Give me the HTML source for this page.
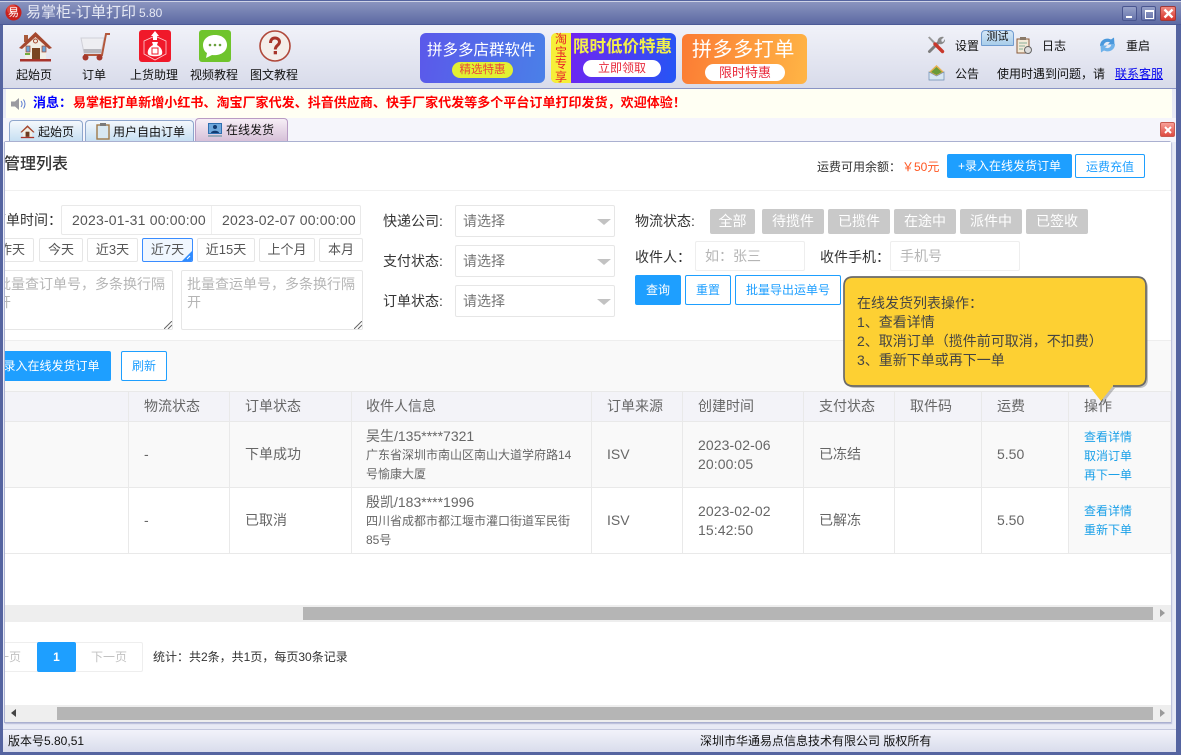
<!DOCTYPE html>
<html lang="zh"><head><meta charset="utf-8"><title>易掌柜-订单打印</title>
<style>
html,body{margin:0;padding:0;width:1181px;height:755px;overflow:hidden;background:#e6e8f3}
body{position:relative;font-family:"Liberation Sans","Noto Sans CJK SC",sans-serif;font-size:14px;color:#666}
.a,.t,.b,svg{position:absolute}
.t{white-space:nowrap;line-height:18px}
.w{font-family:"Liberation Sans","WenQuanYi Zen Hei",sans-serif;font-size:12px;color:#111}
.b{box-sizing:border-box;text-align:center;white-space:nowrap;border-radius:2px}
.bl{background:#1e9fff;color:#fff;font-size:12px;line-height:24px}
.ol{background:#fff;border:1px solid #1e9fff;color:#1e9fff;font-size:12px}
.dt{background:#fff;border:1px solid #e6e6e6;color:#555;font-size:13px;line-height:22px;height:24px;top:238px}
.sel{box-sizing:border-box;position:absolute;left:455px;width:160px;height:32px;border:1px solid #e6e6e6;border-radius:2px;background:#fff;color:#757575;padding-left:7px;line-height:30px}
.sel:after{content:"";position:absolute;right:3px;top:13px;border:7px solid transparent;border-top:6px solid #c2c2c2}
.tag{top:209px;height:25px;background:#c9c9c9;color:#fff;line-height:25px;font-size:14px}
.ta{box-sizing:border-box;position:absolute;top:270px;height:60px;border:1px solid #e6e6e6;border-radius:2px;background:#fff;color:#b5b5b5;font-size:14px;line-height:18px;padding:4px 5px;overflow:hidden}
.vl{position:absolute;width:1px;background:#e9e9e9;top:391px;height:163px}
.hl{position:absolute;height:1px;background:#e9e9e9;left:5px;width:1165px}
.lk{color:#1aa0e8;font-size:12px}
</style></head><body>

<!-- outer frame -->
<div class="a" style="left:0;top:0;width:1181px;height:755px;background:#5564a0"></div>
<div class="a" style="left:3px;top:1px;width:1173px;height:751px;background:#e8eaf5"></div>
<div class="a" style="left:0;top:1px;width:1181px;height:1px;background:#cfd3e6"></div>

<!-- title bar -->
<div class="a" style="left:0;top:2px;width:1181px;height:22px;background:linear-gradient(#8a94bf,#5d6aa3)"></div>
<div class="a" style="left:0;top:24px;width:1181px;height:1px;background:#4c5a96"></div>
<svg style="left:5px;top:4px" width="17" height="17"><circle cx="8.5" cy="8.5" r="8" fill="#c8201c"/><circle cx="7" cy="5.5" r="5" fill="#e8584c" opacity=".7"/></svg>
<div class="t" style="left:6px;top:4px;width:15px;text-align:center;font-size:11px;color:#fff">易</div>
<div class="t" style="left:26px;top:4px;font-size:15px;color:#e6e9f4;font-family:'Liberation Sans','WenQuanYi Zen Hei',sans-serif">易掌柜-订单打印</div>
<div class="t" style="left:139px;top:4px;font-size:12px;color:#e6e9f4">5.80</div>
<div class="a" style="left:1122px;top:6px;width:15px;height:15px;background:linear-gradient(#98a2c9,#6573aa);border:1px solid #4a5690;box-sizing:border-box;border-radius:2px"><div class="a" style="left:3px;top:9px;width:6px;height:2px;background:#fff"></div></div>
<div class="a" style="left:1141px;top:6px;width:15px;height:15px;background:linear-gradient(#98a2c9,#6573aa);border:1px solid #4a5690;box-sizing:border-box;border-radius:2px"><div class="a" style="left:3px;top:3px;width:7px;height:6px;border:1px solid #fff;border-top-width:2px"></div></div>
<div class="a" style="left:1160px;top:6px;width:16px;height:15px;background:linear-gradient(#f08a80,#d8342c);border:1px solid #a03838;box-sizing:border-box;border-radius:2px"><svg style="left:2px;top:1px" width="11" height="11"><path d="M1.5 1.5L9.5 9.5M9.5 1.5L1.5 9.5" stroke="#fff" stroke-width="2.4"/></svg></div>

<!-- toolbar -->
<div class="a" style="left:3px;top:25px;width:1173px;height:63px;background:linear-gradient(#f1f2f9,#d8dbea)"></div>
<div class="a" style="left:3px;top:88px;width:1173px;height:1px;background:#8a94c4"></div>

<!-- home -->
<svg style="left:18px;top:30px" width="35" height="33" viewBox="0 0 35 33">
<rect x="6" y="5" width="4" height="7" fill="#a85a3a"/>
<path d="M7 15L17.5 5L28 15V29H7Z" fill="#f2efe6"/>
<path d="M1 18L17.5 2L34 18L31 19L17.5 7L4 19Z" fill="#a5482f"/>
<circle cx="17.5" cy="11" r="2" fill="none" stroke="#a5482f"/>
<rect x="14" y="18" width="8" height="11" fill="#7a4522"/><rect x="8" y="16" width="4" height="6" fill="#6aa5d8" stroke="#a5482f" stroke-width=".7"/><rect x="24" y="16" width="4" height="6" fill="#6aa5d8" stroke="#a5482f" stroke-width=".7"/>
<rect x="2" y="29" width="31" height="2.500" fill="#a8342c"/><rect x="7" y="23" width="5" height="2" fill="#74ac3c"/>
</svg>
<!-- cart -->
<svg style="left:80px;top:32px" width="32" height="31" viewBox="0 0 32 31">
<path d="M1 6H24L21 21H4Z" fill="#eeeef2" stroke="#d0d0d8"/><path d="M4 21H21L21.500 17H3.500Z" fill="#b8b8be"/>
<path d="M30 2H26L22 23H4" fill="none" stroke="#b3583c" stroke-width="2"/>
<circle cx="5.5" cy="25.5" r="3" fill="#a5382c"/><circle cx="19.5" cy="25.5" r="3" fill="#a5382c"/>
</svg>
<!-- red bag -->
<svg style="left:139px;top:30px" width="32" height="32" viewBox="0 0 32 32">
<rect width="32" height="32" rx="3" fill="#f0192a"/>
<path d="M16 6L27 11V24L16 30L5 24V11Z" fill="none" stroke="#fff" stroke-width=".8" opacity=".8"/>
<path d="M16 1L20 6H18V10H14V6H12Z" fill="#fff"/>
<path d="M13 12H19L18 15C22 17 24 21 23 24C22 27 10 27 9 24C8 21 10 17 14 15Z" fill="#fff"/>
<rect x="13" y="18" width="6" height="6" fill="none" stroke="#f0192a"/>
</svg>
<!-- chat -->
<svg style="left:199px;top:30px" width="32" height="32" viewBox="0 0 32 32">
<rect width="32" height="32" rx="3" fill="#6fc42c"/>
<path d="M16 5C8 5 4 10 4 15C4 19 6 22 8 23L7 28L13 25C21 26 28 22 28 15C28 10 24 5 16 5Z" fill="#fff"/>
<circle cx="11" cy="15" r="1.300" fill="#6aa03c"/><circle cx="16" cy="15" r="1.300" fill="#6aa03c"/><circle cx="21" cy="15" r="1.300" fill="#6aa03c"/>
</svg>
<!-- question -->
<svg style="left:259px;top:30px" width="32" height="32" viewBox="0 0 32 32">
<circle cx="16" cy="16" r="15" fill="#f4eeea" stroke="#b0483a" stroke-width="1.6"/>
<path d="M11.500 13C11.500 9.500 13.500 8 16 8C18.500 8 20.500 9.800 20.500 12C20.500 15.200 16.300 15.500 16.300 19.500" fill="none" stroke="#a8352a" stroke-width="3"/>
<rect x="14.700" y="21" width="3.300" height="3.300" fill="#a8352a"/>
</svg>

<div class="t w" style="left:16px;top:66px">起始页</div>
<div class="t w" style="left:82px;top:66px">订单</div>
<div class="t w" style="left:130px;top:66px">上货助理</div>
<div class="t w" style="left:190px;top:66px">视频教程</div>
<div class="t w" style="left:250px;top:66px">图文教程</div>

<!-- banners -->
<div class="a" style="left:420px;top:33px;width:125px;height:50px;border-radius:6px;background:linear-gradient(100deg,#5b58ea,#4a80e8)"></div>
<div class="t" style="left:427px;top:41px;font-size:15.500px;color:#fff;line-height:20px">拼多多店群软件</div>
<div class="a" style="left:452px;top:62px;width:61px;height:16px;border-radius:8px;background:#e2f033;text-align:center;color:#e8483a;font-size:11.500px;line-height:16px">精选特惠</div>

<div class="a" style="left:551px;top:33px;width:125px;height:50px;border-radius:6px;background:linear-gradient(100deg,#7d1cf0,#2456f5)"></div>
<div class="a" style="left:551px;top:33px;width:20px;height:50px;background:#f6ef38;border-radius:5px 0 0 5px;color:#e8222a;font-size:12px;line-height:12.500px;text-align:center">淘<br>宝<br>专<br>享</div>
<div class="t" style="left:573px;top:37px;font-size:16.500px;color:#f3f04a;font-weight:bold;line-height:20px">限时低价特惠</div>
<div class="a" style="left:583px;top:60px;width:78px;height:17px;border-radius:9px;background:#fff;text-align:center;color:#e8283a;font-size:12px;line-height:17px">立即领取</div>

<div class="a" style="left:682px;top:34px;width:125px;height:50px;border-radius:6px;background:linear-gradient(100deg,#fb7b34,#ffb545)"></div>
<div class="t" style="left:692px;top:38px;font-size:20px;color:#fff;line-height:24px;letter-spacing:.6px">拼多多打单</div>
<div class="a" style="left:705px;top:64px;width:80px;height:17px;border-radius:9px;background:#fff;text-align:center;color:#e8283a;font-size:13px;line-height:17px">限时特惠</div>

<!-- right tools -->
<svg style="left:927px;top:36px" width="18" height="18" viewBox="0 0 18 18">
<path d="M2.500 15.500L13 5" stroke="#7d7d7d" stroke-width="3" stroke-linecap="round"/>
<path d="M10.500 5.500C10.500 2 14 0 17 1L14 4L14.500 5.500L16 6L18 3C18.500 6.500 15 9 12 8Z" fill="#8a8a8a"/>
<path d="M1 1.500L2.500 .5L8 6L6.500 7.500Z" fill="#9a9a9a"/>
<path d="M8 8L15.500 15.500" stroke="#c8382c" stroke-width="3.400" stroke-linecap="round"/>
</svg>
<div class="t w" style="left:955px;top:37px">设置</div>
<div class="a" style="left:981px;top:30px;width:33px;height:16px;box-sizing:border-box;border:1px solid #6f9bd0;border-radius:4px 4px 1px 1px;background:linear-gradient(#d4e6f6,#a8cdea);text-align:center;line-height:13px;font-size:11px;color:#111;font-family:'Liberation Sans','WenQuanYi Zen Hei',sans-serif">测试</div>
<svg style="left:1016px;top:37px" width="16" height="17" viewBox="0 0 16 17">
<rect x="1" y="2" width="12" height="14" fill="#f3ead8" stroke="#8a5a3a"/><rect x="4" y="0" width="6" height="3" fill="#8a7a6a"/>
<path d="M3 6H11M3 9H9M3 12H7" stroke="#8ab09a"/><circle cx="12" cy="13" r="3.500" fill="#ddd" stroke="#666"/>
</svg>
<div class="t w" style="left:1042px;top:37px">日志</div>
<svg style="left:1099px;top:37px" width="17" height="16" viewBox="0 0 17 16">
<path d="M1 9C1 3 7 0 12 2.500L15 .5L15.500 7.500H8.500L11 5.500C8 4 5 5.500 4.500 9Z" fill="#4a98dc"/>
<path d="M16 7C16 13 10 16 5 13.500L2 15.500L1.500 8.500H8.500L6 10.500C9 12 12 10.500 12.500 7Z" fill="#6fb2ea"/>
</svg>
<div class="t w" style="left:1126px;top:37px">重启</div>
<svg style="left:928px;top:64px" width="17" height="17" viewBox="0 0 17 17">
<path d="M1 8L8.500 1L16 8V16H1Z" fill="#e8b050"/><path d="M3 8L8.500 3L14 8L8.500 11Z" fill="#6a9a38"/>
<path d="M1 8L8.500 12L16 8V16H1Z" fill="#d8e6f2" stroke="#6a8ab0" stroke-width=".7"/>
</svg>
<div class="t w" style="left:955px;top:65px">公告</div>
<div class="t w" style="left:997px;top:65px">使用时遇到问题，请</div>
<div class="t w" style="left:1115px;top:65px;color:#0000ee;text-decoration:underline">联系客服</div>

<!-- message -->
<div class="a" style="left:6px;top:89px;width:1166px;height:29px;background:#fffff3"></div>
<svg style="left:11px;top:98px" width="16" height="12" viewBox="0 0 16 12">
<path d="M0 3.500H4L8 0V12L4 8.500H0Z" fill="#9a9aa0"/><path d="M10 3C11.500 5 11.500 7 10 9M12.500 1.500C14.500 4.500 14.500 7.500 12.500 10.500" fill="none" stroke="#5a7ad0"/>
</svg>
<div class="t" style="left:33px;top:94px;font-size:13px;font-weight:bold;color:#0000ff">消息：</div>
<div class="t" style="left:73px;top:94px;font-size:13px;font-weight:bold;color:#ff0000;letter-spacing:.04px">易掌柜打单新增小红书、淘宝厂家代发、抖音供应商、快手厂家代发等多个平台订单打印发货，欢迎体验！</div>

<!-- tabs strip -->
<div class="a" style="left:3px;top:118px;width:1173px;height:24px;background:#f5f5fb"></div>
<div class="a" style="left:9px;top:120px;width:74px;height:22px;box-sizing:border-box;border:1px solid #8ea6cc;border-bottom:0;border-radius:4px 4px 0 0;background:linear-gradient(#f4f8fc,#c4def2)"></div>
<div class="a" style="left:85px;top:120px;width:109px;height:22px;box-sizing:border-box;border:1px solid #8ea6cc;border-bottom:0;border-radius:4px 4px 0 0;background:linear-gradient(#f4f8fc,#c4def2)"></div>
<div class="a" style="left:195px;top:118px;width:93px;height:25px;box-sizing:border-box;border:1px solid #b89cc4;border-bottom:0;border-radius:4px 4px 0 0;background:linear-gradient(#f6eef6,#d4bcd6)"></div>
<svg style="left:20px;top:124px" width="15" height="15" viewBox="0 0 35 33">
<path d="M7 15L17.500 5L28 15V29H7Z" fill="#f2efe6"/><path d="M1 18L17.500 2L34 18L31 19L17.500 7L4 19Z" fill="#a5482f"/>
<rect x="13" y="17" width="9" height="12" fill="#6b3a1f"/><rect x="2" y="29" width="31" height="3" fill="#a8342c"/>
</svg>
<div class="t w" style="left:38px;top:123px">起始页</div>
<svg style="left:96px;top:123px" width="14" height="17" viewBox="0 0 14 17">
<rect x="1" y="2" width="12" height="14" fill="#d8e8f2" stroke="#a07a4a" stroke-width="1.400"/><rect x="4" y="0" width="6" height="3" fill="#7a7a7a"/>
</svg>
<div class="t w" style="left:113px;top:123px">用户自由订单</div>
<svg style="left:208px;top:123px" width="14" height="14" viewBox="0 0 14 14">
<rect width="14" height="11" fill="#2f6fb0"/><rect x="1" y="1" width="12" height="9" fill="#6fa8dc"/><circle cx="7" cy="4" r="2" fill="#123a70"/><path d="M3 10C3 7 11 7 11 10Z" fill="#123a70"/><rect y="12" width="14" height="2" fill="#9ab"/>
</svg>
<div class="t w" style="left:226px;top:121px">在线发货</div>
<div class="a" style="left:1160px;top:122px;width:15px;height:15px;box-sizing:border-box;border:1px solid #c85a50;border-radius:2px;background:linear-gradient(#f8a098,#de4a40)"><svg style="left:2.500px;top:2.500px" width="8" height="8"><path d="M1 1L7 7M7 1L1 7" stroke="#fff" stroke-width="2"/></svg></div>

<!-- content -->
<div class="a" style="left:4px;top:141px;width:1167px;height:582px;box-sizing:border-box;background:#fff;border:1px solid #aab0d0;border-radius:2px 2px 0 0;box-shadow:1px 1px 1px #b8bcd8"></div>
<div class="a" style="left:5px;top:142px;width:1166px;height:580px;overflow:hidden;background:#fff">
<div class="a" style="left:-5px;top:-142px;width:1181px;height:755px">

<div class="t" style="left:4px;top:156px;font-size:16px;color:#333;line-height:18px;font-weight:500">管理列表</div>
<div class="a" style="left:0;top:190px;width:1181px;height:1px;background:#f0f0f0"></div>
<div class="t" style="left:817px;top:158px;font-size:12px;color:#333">运费可用余额：</div>
<div class="t" style="left:902px;top:158px;font-size:12px;color:#ff5722">￥50元</div>
<div class="b bl" style="left:947px;top:154px;width:125px;height:24px">+录入在线发货订单</div>
<div class="b ol" style="left:1075px;top:154px;width:70px;height:24px;line-height:24px">运费充值</div>

<!-- date -->
<div class="t" style="left:-8px;top:211px;color:#333">下单时间：</div>
<div class="a" style="left:61px;top:205px;width:300px;height:30px;box-sizing:border-box;border:1px solid #e9e9e9;border-radius:2px"></div>
<div class="a" style="left:211px;top:206px;width:1px;height:28px;background:#eee"></div>
<div class="t" style="left:72px;top:211px;color:#555;letter-spacing:.2px">2023-01-31 00:00:00</div>
<div class="t" style="left:222px;top:211px;color:#555;letter-spacing:.2px">2023-02-07 00:00:00</div>

<div class="b dt" style="left:-10px;width:44px">昨天</div>
<div class="b dt" style="left:39px;width:44px">今天</div>
<div class="b dt" style="left:87px;width:51px">近3天</div>
<div class="b dt" style="left:142px;width:51px;background:#f0f7ff;border-color:#3a8cff;overflow:hidden">近7天<svg style="right:0;bottom:0" width="10" height="10"><path d="M10 0V10H0Z" fill="#2f8cff"/><path d="M5 8L8 5" stroke="#fff"/></svg></div>
<div class="b dt" style="left:197px;width:58px">近15天</div>
<div class="b dt" style="left:259px;width:56px">上个月</div>
<div class="b dt" style="left:319px;width:44px">本月</div>

<div class="ta" style="left:-9px;width:182px;padding-left:5px;line-height:18px">批量查订单号，多条换行隔开</div>
<div class="ta" style="left:181px;width:182px">批量查运单号，多条换行隔开</div>
<svg style="left:164px;top:321px" width="8" height="8"><path d="M0 8L8 0M4 8L8 4" stroke="#666"/></svg>
<svg style="left:354px;top:321px" width="8" height="8"><path d="M0 8L8 0M4 8L8 4" stroke="#666"/></svg>

<!-- selects -->
<div class="t" style="left:383px;top:212px;color:#333">快递公司:</div>
<div class="t" style="left:383px;top:252px;color:#333">支付状态:</div>
<div class="t" style="left:383px;top:292px;color:#333">订单状态:</div>
<div class="sel" style="top:205px">请选择</div>
<div class="sel" style="top:245px">请选择</div>
<div class="sel" style="top:285px">请选择</div>

<div class="t" style="left:635px;top:212px;color:#333">物流状态:</div>
<div class="b tag" style="left:710px;width:45px">全部</div>
<div class="b tag" style="left:762px;width:62px">待揽件</div>
<div class="b tag" style="left:828px;width:62px">已揽件</div>
<div class="b tag" style="left:894px;width:62px">在途中</div>
<div class="b tag" style="left:960px;width:62px">派件中</div>
<div class="b tag" style="left:1026px;width:62px">已签收</div>

<div class="t" style="left:635px;top:248px;color:#333">收件人：</div>
<div class="a" style="left:695px;top:241px;width:110px;height:30px;box-sizing:border-box;border:1px solid #eee;border-radius:2px;padding-left:9px;line-height:28px;color:#b5b5b5">如：张三</div>
<div class="t" style="left:820px;top:248px;color:#333">收件手机：</div>
<div class="a" style="left:890px;top:241px;width:130px;height:30px;box-sizing:border-box;border:1px solid #eee;border-radius:2px;padding-left:9px;line-height:28px;color:#b5b5b5">手机号</div>

<div class="b bl" style="left:635px;top:275px;width:46px;height:30px;line-height:30px">查询</div>
<div class="b ol" style="left:685px;top:275px;width:46px;height:30px;line-height:28px">重置</div>
<div class="b ol" style="left:735px;top:275px;width:106px;height:30px;line-height:28px">批量导出运单号</div>

<!-- action bar -->
<div class="a" style="left:0;top:340px;width:1181px;height:51px;background:#f9f9f9;border-top:1px solid #eee;box-sizing:border-box"></div>
<div class="b bl" style="left:-30px;top:351px;width:141px;height:30px;line-height:30px;padding-left:15px">+录入在线发货订单</div>
<div class="b ol" style="left:121px;top:351px;width:46px;height:30px;line-height:28px">刷新</div>

<!-- table -->
<div class="a" style="left:0;top:391px;width:1170px;height:31px;background:#f3f3f8"></div>
<div class="a" style="left:0;top:422px;width:1170px;height:66px;background:#f9f9f9"></div>
<div class="a" style="left:1069px;top:488px;width:101px;height:66px;background:#f9f9f9"></div>
<div class="hl" style="top:391px"></div><div class="hl" style="top:421px"></div><div class="hl" style="top:487px"></div><div class="hl" style="top:553px"></div>
<div class="vl" style="left:128px"></div><div class="vl" style="left:229px"></div><div class="vl" style="left:351px"></div><div class="vl" style="left:591px"></div><div class="vl" style="left:682px"></div><div class="vl" style="left:803px"></div><div class="vl" style="left:894px"></div><div class="vl" style="left:981px"></div><div class="vl" style="left:1068px"></div><div class="vl" style="left:1170px"></div>

<div class="t" style="left:144px;top:397px">物流状态</div>
<div class="t" style="left:245px;top:397px">订单状态</div>
<div class="t" style="left:366px;top:397px">收件人信息</div>
<div class="t" style="left:607px;top:397px">订单来源</div>
<div class="t" style="left:698px;top:397px">创建时间</div>
<div class="t" style="left:819px;top:397px">支付状态</div>
<div class="t" style="left:910px;top:397px">取件码</div>
<div class="t" style="left:997px;top:397px">运费</div>
<div class="t" style="left:1084px;top:397px">操作</div>

<div class="t" style="left:144px;top:445px">-</div>
<div class="t" style="left:245px;top:445px">下单成功</div>
<div class="t" style="left:366px;top:427px">吴生/135****7321</div>
<div class="t" style="left:366px;top:446px;font-size:12px">广东省深圳市南山区南山大道学府路14</div>
<div class="t" style="left:366px;top:465px;font-size:12px">号愉康大厦</div>
<div class="t" style="left:607px;top:445px">ISV</div>
<div class="t" style="left:698px;top:436px;letter-spacing:.1px">2023-02-06</div>
<div class="t" style="left:698px;top:455px;letter-spacing:.1px">20:00:05</div>
<div class="t" style="left:819px;top:445px">已冻结</div>
<div class="t" style="left:997px;top:445px">5.50</div>
<div class="t lk" style="left:1084px;top:428px">查看详情</div>
<div class="t lk" style="left:1084px;top:447px">取消订单</div>
<div class="t lk" style="left:1084px;top:466px">再下一单</div>

<div class="t" style="left:144px;top:511px">-</div>
<div class="t" style="left:245px;top:511px">已取消</div>
<div class="t" style="left:366px;top:493px">殷凯/183****1996</div>
<div class="t" style="left:366px;top:512px;font-size:12px">四川省成都市都江堰市灌口街道军民街</div>
<div class="t" style="left:366px;top:531px;font-size:12px">85号</div>
<div class="t" style="left:607px;top:511px">ISV</div>
<div class="t" style="left:698px;top:502px;letter-spacing:.1px">2023-02-02</div>
<div class="t" style="left:698px;top:521px;letter-spacing:.1px">15:42:50</div>
<div class="t" style="left:819px;top:511px">已解冻</div>
<div class="t" style="left:997px;top:511px">5.50</div>
<div class="t lk" style="left:1084px;top:502px">查看详情</div>
<div class="t lk" style="left:1084px;top:521px">重新下单</div>

<!-- inner scrollbar -->
<div class="a" style="left:0;top:605px;width:1171px;height:17px;background:#eee"></div>
<div class="a" style="left:303px;top:607px;width:850px;height:13px;background:#b5b5b5"></div>
<svg style="left:1160px;top:609px" width="5" height="8"><path d="M0 0L5 4L0 8Z" fill="#9a9a9a"/></svg>

<!-- pagination -->
<div class="a" style="left:-20px;top:642px;width:163px;height:30px;box-sizing:border-box;border:1px solid #eee;border-radius:2px"></div>
<div class="t" style="left:-15px;top:648px;color:#c2c2c2;font-size:12px">上一页</div>
<div class="b" style="left:37px;top:642px;width:39px;height:30px;background:#1e9fff;color:#fff;font-size:12px;line-height:30px;font-weight:bold">1</div>
<div class="t" style="left:91px;top:648px;color:#c2c2c2;font-size:12px">下一页</div>
<div class="t" style="left:153px;top:648px;font-size:12px;color:#333">统计：共2条，共1页，每页30条记录</div>

<!-- outer scrollbar -->
<div class="a" style="left:0;top:705px;width:1171px;height:18px;background:#eee"></div>
<div class="a" style="left:57px;top:707px;width:1096px;height:13px;background:#b5b5b5"></div>
<svg style="left:11px;top:709px" width="5" height="8"><path d="M5 0L0 4L5 8Z" fill="#444"/></svg>
<svg style="left:1160px;top:709px" width="5" height="8"><path d="M0 0L5 4L0 8Z" fill="#9a9a9a"/></svg>
</div></div>

<!-- tooltip -->
<svg style="left:838px;top:272px;overflow:visible" width="320" height="134">
<path d="M15 5H299C305 5 308 8 308 14V105C308 111 305 114 299 114H275L263 129L251 114H15C9 114 6 111 6 105V14C6 8 9 5 15 5Z" fill="#555" opacity=".35" transform="translate(2,2)"/>
<path d="M15 5H299C305 5 308 8 308 14V105C308 111 305 114 299 114H275L263 129L251 114H15C9 114 6 111 6 105V14C6 8 9 5 15 5Z" fill="#fdd033"/>
<path d="M251 114H15C9 114 6 111 6 105V14C6 8 9 5 15 5H299C305 5 308 8 308 14V105C308 111 305 114 299 114H275" fill="none" stroke="#6a6a6a" stroke-width="1.700"/>
</svg>
<div class="a" style="left:857px;top:294px;font-size:14px;line-height:19px;color:#444;white-space:nowrap">在线发货列表操作：<br>1、查看详情<br>2、取消订单（揽件前可取消，不扣费）<br>3、重新下单或再下一单</div>

<!-- status bar -->
<div class="a" style="left:3px;top:729px;width:1173px;height:23px;background:linear-gradient(#f2f3fa,#d9dcec);border-top:1px solid #c4c8de;box-sizing:border-box"></div>
<div class="t w" style="left:8px;top:732px">版本号5.80,51</div>
<div class="t w" style="left:700px;top:732px">深圳市华通易点信息技术有限公司 版权所有</div>
</body></html>
